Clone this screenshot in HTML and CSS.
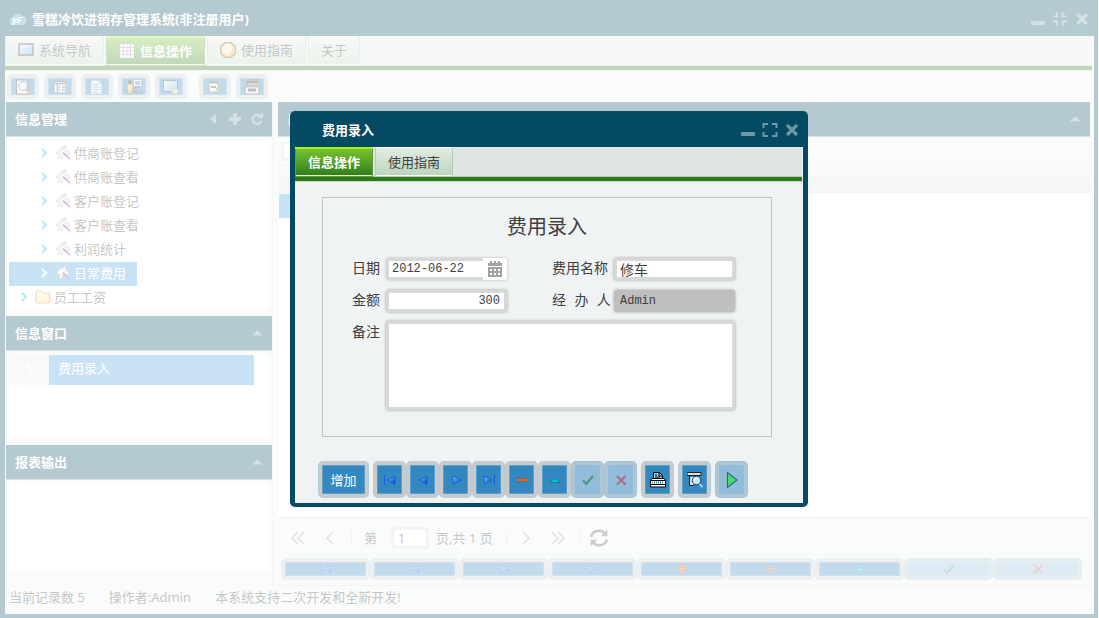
FILE: index.html
```html
<!DOCTYPE html>
<html lang="zh-CN">
<head>
  <meta charset="UTF-8">
  <title>雪糕冷饮进销存管理系统</title>
  <meta name="viewport" content="width=device-width, initial-scale=1">
  <link rel="stylesheet" href="styles.css">
</head>
<body>

<!-- ICONS -->
<svg class="defs" aria-hidden="true">
  <defs>
    <linearGradient id="blue" x1="0" y1="0" x2="1" y2="1"><stop offset="0" stop-color="#7cc4ff"/><stop offset="1" stop-color="#0048d8"/></linearGradient>
    <linearGradient id="screen" x1="0" y1="0" x2="1" y2="1"><stop offset="0" stop-color="#e4f4ff"/><stop offset="1" stop-color="#4aa4e0"/></linearGradient>
  </defs>
  <symbol id="i-min" viewBox="0 0 16 16"><rect x="1" y="10" width="14" height="4" rx="1" fill="currentColor"/></symbol>
  <symbol id="i-max" viewBox="0 0 16 16"><path d="M1.500 6V2H6M10 2h4.500v4M14.500 10v4H10M6 14H1.500v-4" fill="none" stroke="currentColor" stroke-width="2"/></symbol>
  <symbol id="i-restore" viewBox="0 0 16 16"><path d="M5 1v4.500H1M10.500 1v4.500H15M15 10.500h-4.500V15M5 15v-4.500H1" fill="none" stroke="currentColor" stroke-width="2"/></symbol>
  <symbol id="i-close" viewBox="0 0 16 16"><path d="M4 4l8 8M12 4l-8 8" stroke="currentColor" stroke-width="3.200" stroke-linecap="round"/></symbol>
  <symbol id="i-left" viewBox="0 0 16 16"><path d="M11 3v10L5 8z" fill="currentColor"/></symbol>
  <symbol id="i-up" viewBox="0 0 16 16"><path d="M3 10.500h10.500L8.200 5z" fill="currentColor"/></symbol>
  <symbol id="i-add" viewBox="0 0 16 16"><path d="M8 2v12M2 8h12" stroke="currentColor" stroke-width="4"/></symbol>
  <symbol id="i-reload" viewBox="0 0 16 16"><path d="M11.500 5.200A4.500 4.500 0 1 0 12.500 9.500" fill="none" stroke="currentColor" stroke-width="2.600"/><path d="M8 7h6V1z" fill="currentColor"/></symbol>
  <symbol id="i-chev" viewBox="0 0 16 16"><path d="M6 4l4 4-4 4" fill="none" stroke="currentColor" stroke-width="1.800"/></symbol>
  <symbol id="i-house" viewBox="0 0 16 16"><path d="M1 8l6-6 2 1V1h2v4l4 3-2 1v3l-3-3-2 1-1 4-3-1V9z" fill="#e4e4e4" stroke="#777" stroke-width=".8" stroke-dasharray="2 1"/><path d="M9 8.500l6 6" stroke="#9b20e0" stroke-width="1.500"/><path d="M8 7.500l3 3" stroke="#444" stroke-width="1.500"/></symbol>
  <symbol id="i-folder" viewBox="0 0 16 16"><path d="M1 13V3l1-1h4l2 2h6v2h1v7l-1 1H2z" fill="#fce79a" stroke="#ac8434"/><path d="M3 13V6h11" stroke="#fff9d2" fill="none"/></symbol>
  <symbol id="i-screen" viewBox="0 0 16 16"><rect x="1" y="2" width="14" height="11" fill="url(#screen)" stroke="#333" stroke-width="1.500"/></symbol>
  <symbol id="i-grid" viewBox="0 0 16 16"><rect x="1" y="1" width="14" height="14" rx="2" fill="#fff"/><path d="M4.500 1v14M8 1v14M11.500 1v14M1 4.500h14M1 8h14M1 11.500h14" stroke="#a68caa" stroke-width="1"/></symbol>
  <symbol id="i-help" viewBox="0 0 16 16"><path d="M5 .500h6L15.500 5v6L11 15.500H5L.500 11V5z" fill="#f7b443" stroke="#704b22" stroke-width="1.400"/><circle cx="7" cy="7" r="5" fill="#ffe4a8"/><path d="M5.500 6c0-3 5-3 5 0 0 1.600-2.500 1.500-2.500 3.500M8 11v1.800" fill="none" stroke="#fff" stroke-width="2"/></symbol>
  <symbol id="i-find" viewBox="0 0 16 16"><path d="M1.500 1H11l2 2v12H1.500z" fill="#f4f4f4" stroke="#333"/><circle cx="8" cy="7" r="4.500" fill="#cdefff" stroke="#3a5870"/><path d="M11 10l4 5" stroke="#c55828" stroke-width="2.400"/></symbol>
  <symbol id="i-form" viewBox="0 0 16 16"><rect x="2" y="2.500" width="12" height="11.500" fill="#e6eef5" stroke="#456"/><path d="M2 4.500h12M5.500 5v9M7 8h1M7 11h1M10 8h3M10 11h3" stroke="#456" stroke-width="1.500"/></symbol>
  <symbol id="i-doc" viewBox="0 0 16 16"><path d="M2 1h8l3 3v11H2z" fill="#dff1ff" stroke="#3c88c0"/><path d="M10 1v3h3M4 5.500h5M4 8h7M4 10.500h7M4 13h5" fill="none" stroke="#4e89b8"/></symbol>
  <symbol id="i-user" viewBox="0 0 16 16"><circle cx="4" cy="3" r="2" fill="#3b2208"/><path d="M1 5h6v6H6v4H2v-4H1z" fill="#efc05c" stroke="#432" stroke-width=".8"/><rect x="8.500" y="1.500" width="6" height="5" fill="#6565f2" stroke="#eee"/><path d="M8 8h6M8 14V9h2v5h5v-3" fill="none" stroke="#444" stroke-width="1.300"/></symbol>
  <symbol id="i-view" viewBox="0 0 16 16"><rect x=".500" y="1.500" width="14" height="11" fill="url(#screen)" stroke="#345"/><circle cx="12" cy="12" r="3" fill="#c6e784" stroke="#a7a"/></symbol>
  <symbol id="i-export" viewBox="0 0 16 16"><path d="M2 4h9v9H2z" fill="#eee" stroke="#555"/><path d="M2 3h9M4 8h5" stroke="#444" stroke-width="2"/><path d="M12 7v6M9 10h6" stroke="#2ca82c" stroke-width="2"/></symbol>
  <symbol id="i-printer" viewBox="0 0 16 16"><path d="M3 1h12v5H3zM1 7h14v8H1z" fill="#eee" stroke="#333"/><path d="M3 3h11M4 11h8" stroke="#222" stroke-width="3"/><path d="M1 8h13" stroke="#555"/></symbol>
  <symbol id="i-first" viewBox="0 0 16 16"><path d="M2.500 3v10" stroke="#1262dc"/><path d="M13 4v8L5 8z" fill="url(#blue)" stroke="#0950c8" stroke-width=".7"/></symbol>
  <symbol id="i-prev" viewBox="0 0 16 16"><path d="M12 4v8L4 8z" fill="url(#blue)" stroke="#0950c8" stroke-width=".7"/></symbol>
  <symbol id="i-next" viewBox="0 0 16 16"><path d="M5 4v8l8-4z" fill="url(#blue)" stroke="#0950c8" stroke-width=".7"/></symbol>
  <symbol id="i-last" viewBox="0 0 16 16"><path d="M3 4v8l8-4z" fill="url(#blue)" stroke="#0950c8" stroke-width=".7"/><path d="M13.500 3v10" stroke="#1262dc"/></symbol>
  <symbol id="i-plus" viewBox="0 0 16 16"><path d="M8 3v10M3 8h10" stroke="#d33a00" stroke-width="3"/><path d="M8 4v8M4 8h8" stroke="#ff9c50"/></symbol>
  <symbol id="i-minus" viewBox="0 0 16 16"><path d="M3 8h10" stroke="#d33a00" stroke-width="3"/><path d="M3 8h10" stroke="#ff9a28"/></symbol>
  <symbol id="i-edit" viewBox="0 0 16 16"><path d="M3 10.500h10L8 6z" fill="#00cbd0" stroke="#087a8e" stroke-width=".8"/></symbol>
  <symbol id="i-ok" viewBox="0 0 16 16"><path d="M3 8.500L6.200 12 13 4" fill="none" stroke="#178038" stroke-width="2"/></symbol>
  <symbol id="i-cancel" viewBox="0 0 16 16"><path d="M4 4l8.500 8.500M12.500 4L4 12.500" stroke="#d13030" stroke-width="1.800"/></symbol>
  <symbol id="i-print" viewBox="0 0 16 16"><path d="M3.500 7V.500h6l3 3V7z" fill="#9fd0ec" stroke="#000"/><path d="M9 1v3h3M5 3h2M5 5h5" fill="none" stroke="#000"/><path d="M.500 8.500l1.500-2h12l1.500 2v6.500H.500z" fill="#fff" stroke="#000"/><path d="M1 8.500h14M1 12.500h14" stroke="#000"/><path d="M2 10.500h12" stroke="#2c83b9" stroke-width="2" stroke-dasharray="1 1"/></symbol>
  <symbol id="i-preview" viewBox="0 0 16 16"><path d="M0 .500h14v3H0z" fill="#ddd" stroke="#222"/><path d="M2.500 4v9.500H7" fill="#ccc" stroke="#222"/><path d="M3.500 5h3v7h-3z" fill="#eee"/><circle cx="9.500" cy="8.500" r="4.300" fill="#bdeaff" stroke="#163c5c"/><path d="M7.500 9c0-2 1-3 3-3" fill="none" stroke="#fff" stroke-width="1.500"/><path d="M12.500 12l3 3" stroke="#8ed8ff" stroke-width="2"/></symbol>
  <symbol id="i-play" viewBox="0 0 16 16"><path d="M4 1.500v13L12.500 8z" fill="#47e070" stroke="#3c6575"/></symbol>
  <symbol id="i-pg1" viewBox="0 0 16 16"><path d="M8 2L2 8l6 6M14 2L8 8l6 6" fill="none" stroke="currentColor" stroke-width="1.500"/></symbol>
  <symbol id="i-pg2" viewBox="0 0 16 16"><path d="M11 2L5 8l6 6" fill="none" stroke="currentColor" stroke-width="1.500"/></symbol>
  <symbol id="i-pg3" viewBox="0 0 16 16"><path d="M5 2l6 6-6 6" fill="none" stroke="currentColor" stroke-width="1.500"/></symbol>
  <symbol id="i-pg4" viewBox="0 0 16 16"><path d="M2 2l6 6-6 6M8 2l6 6-6 6" fill="none" stroke="currentColor" stroke-width="1.500"/></symbol>
  <symbol id="i-refresh" viewBox="0 0 16 16"><path d="M1 7c1-6 9-7 12-3M15 9c-1 6-9 7-12 3" fill="none" stroke="currentColor" stroke-width="2.200"/><path d="M15.500 .500v6h-6zM.500 15.500v-6h6z" fill="currentColor"/></symbol>
  <symbol id="i-cal" viewBox="0 0 16 16"><path d="M1 2h14v3H1zM1 6h14v10H1zM3 0h2v3H3zM11 0h2v3h-2zM7 0h2v3H7z" fill="#a2a2a2"/><path d="M3 8h2v2H3zM7 8h2v2H7zM11 8h2v2h-2zM3 12h2v2H3zM7 12h2v2H7zM11 12h2v2h-2z" fill="#fff"/></symbol>
</svg>

<!-- MAIN WINDOW -->
<div class="window">
  <header class="titlebar">
    <svg class="logo" viewBox="0 0 16 16"><path d="M4 14a4 4 0 0 1-1-8 5 5 0 0 1 9-1 4 4 0 0 1 1 9z" fill="#4c9fd2"/><text x="2" y="12">yF</text></svg>
    <h1>雪糕冷饮进销存管理系统(非注册用户)</h1>
    <div class="tools">
      <button aria-label="最小化"><svg><use href="#i-min"/></svg></button>
      <button aria-label="还原"><svg><use href="#i-restore"/></svg></button>
      <button aria-label="关闭"><svg><use href="#i-close"/></svg></button>
    </div>
  </header>

  <div class="window-body">
    <nav class="tabs">
      <button class="tab"><svg><use href="#i-screen"/></svg>系统导航</button>
      <button class="tab active"><svg><use href="#i-grid"/></svg>信息操作</button>
      <button class="tab"><svg><use href="#i-help"/></svg>使用指南</button>
      <button class="tab">关于</button>
    </nav>

    <div class="toolbar">
      <button class="btn" aria-label="查找"><svg><use href="#i-find"/></svg></button>
      <button class="btn" aria-label="表单"><svg><use href="#i-form"/></svg></button>
      <button class="btn" aria-label="文档"><svg><use href="#i-doc"/></svg></button>
      <button class="btn" aria-label="用户"><svg><use href="#i-user"/></svg></button>
      <button class="btn" aria-label="查看"><svg><use href="#i-view"/></svg></button>
      <button class="btn group" aria-label="导出"><svg><use href="#i-export"/></svg></button>
      <button class="btn" aria-label="打印"><svg><use href="#i-printer"/></svg></button>
    </div>

    <main class="layout">
      <aside class="side">
        <section class="panel">
          <div class="panel-head"><h2>信息管理</h2>
            <div class="tools">
              <button aria-label="折叠"><svg><use href="#i-left"/></svg></button>
              <button aria-label="添加"><svg><use href="#i-add"/></svg></button>
              <button aria-label="刷新"><svg><use href="#i-reload"/></svg></button>
            </div>
          </div>
          <div class="panel-body tree">
            <ul>
              <li><svg class="chev"><use href="#i-chev"/></svg><svg><use href="#i-house"/></svg>供商账登记</li>
              <li><svg class="chev"><use href="#i-chev"/></svg><svg><use href="#i-house"/></svg>供商账查看</li>
              <li><svg class="chev"><use href="#i-chev"/></svg><svg><use href="#i-house"/></svg>客户账登记</li>
              <li><svg class="chev"><use href="#i-chev"/></svg><svg><use href="#i-house"/></svg>客户账查看</li>
              <li><svg class="chev"><use href="#i-chev"/></svg><svg><use href="#i-house"/></svg>利润统计</li>
              <li class="selected"><svg class="chev"><use href="#i-chev"/></svg><svg><use href="#i-house"/></svg>日常费用</li>
              <li class="top"><svg class="chev"><use href="#i-chev"/></svg><svg class="folder"><use href="#i-folder"/></svg>员工工资</li>
            </ul>
          </div>
        </section>

        <section class="panel">
          <div class="panel-head"><h2>信息窗口</h2>
            <div class="tools"><button aria-label="折叠"><svg><use href="#i-up"/></svg></button></div>
          </div>
          <div class="panel-body">
            <table class="list"><tr><th>1</th><td>费用录入</td></tr></table>
          </div>
        </section>

        <section class="panel">
          <div class="panel-head"><h2>报表输出</h2>
            <div class="tools"><button aria-label="折叠"><svg><use href="#i-up"/></svg></button></div>
          </div>
          <div class="panel-body last"></div>
        </section>
      </aside>

      <section class="content">
        <div class="panel-head"><h2>日常</h2>
          <div class="tools"><button aria-label="折叠"><svg><use href="#i-up"/></svg></button></div>
        </div>
        <div class="filter"><input type="text" aria-label="筛选"></div>
        <div class="grid-head"></div>
        <div class="grid-body"><div class="grid-row"></div></div>
        <div class="pager">
          <button aria-label="首页"><svg><use href="#i-pg1"/></svg></button>
          <button aria-label="上一页"><svg><use href="#i-pg2"/></svg></button>
          <i class="sep"></i>
          <label for="page">第</label>
          <input id="page" type="text" value="1">
          <span>页,共 1 页</span>
          <i class="sep"></i>
          <button aria-label="下一页"><svg><use href="#i-pg3"/></svg></button>
          <button aria-label="末页"><svg><use href="#i-pg4"/></svg></button>
          <i class="sep"></i>
          <button class="refresh" aria-label="刷新"><svg><use href="#i-refresh"/></svg></button>
        </div>
        <div class="record-nav">
          <button class="btn" aria-label="首条"><svg><use href="#i-first"/></svg></button>
          <button class="btn" aria-label="上一条"><svg><use href="#i-prev"/></svg></button>
          <button class="btn" aria-label="下一条"><svg><use href="#i-next"/></svg></button>
          <button class="btn" aria-label="末条"><svg><use href="#i-last"/></svg></button>
          <button class="btn" aria-label="增加"><svg><use href="#i-plus"/></svg></button>
          <button class="btn" aria-label="删除"><svg><use href="#i-minus"/></svg></button>
          <button class="btn" aria-label="编辑"><svg><use href="#i-edit"/></svg></button>
          <button class="btn" aria-label="确定" disabled><svg><use href="#i-ok"/></svg></button>
          <button class="btn" aria-label="取消" disabled><svg><use href="#i-cancel"/></svg></button>
        </div>
      </section>
    </main>

    <footer class="status">
      <span>当前记录数 5</span>
      <span>操作者:Admin</span>
      <span>本系统支持二次开发和全新开发!</span>
    </footer>
  </div>
</div>

<!-- DIALOG -->
<div class="mask">
  <div class="dialog" role="dialog" aria-labelledby="dlg-title">
    <div class="dialog-head">
      <h2 id="dlg-title">费用录入</h2>
      <div class="tools">
        <button aria-label="最小化"><svg><use href="#i-min"/></svg></button>
        <button aria-label="最大化"><svg><use href="#i-max"/></svg></button>
        <button aria-label="关闭"><svg><use href="#i-close"/></svg></button>
      </div>
    </div>
    <div class="tabs">
      <button class="tab active">信息操作</button>
      <button class="tab">使用指南</button>
    </div>

    <form class="form">
      <h3>费用录入</h3>
      <div class="fields">
        <label for="date">日期</label>
        <div class="date"><input id="date" type="text" value="2012-06-22"><button type="button" aria-label="选择日期"><svg><use href="#i-cal"/></svg></button></div>
        <label for="name" class="second">费用名称</label>
        <input id="name" type="text" value="修车">
        <label for="amount">金额</label>
        <input id="amount" class="number" type="text" value="300">
        <label for="user" class="second">经 办 人</label>
        <input id="user" type="text" value="Admin" readonly>
        <label for="memo">备注</label>
        <textarea id="memo"></textarea>
      </div>
    </form>

    <div class="actions">
      <button class="btn text">增加</button>
      <button class="btn" aria-label="首条"><svg><use href="#i-first"/></svg></button>
      <button class="btn" aria-label="上一条"><svg><use href="#i-prev"/></svg></button>
      <button class="btn" aria-label="下一条"><svg><use href="#i-next"/></svg></button>
      <button class="btn" aria-label="末条"><svg><use href="#i-last"/></svg></button>
      <button class="btn" aria-label="删除"><svg><use href="#i-minus"/></svg></button>
      <button class="btn" aria-label="编辑"><svg><use href="#i-edit"/></svg></button>
      <button class="btn" aria-label="确定" disabled><svg><use href="#i-ok"/></svg></button>
      <button class="btn" aria-label="取消" disabled><svg><use href="#i-cancel"/></svg></button>
      <button class="btn group" aria-label="打印"><svg><use href="#i-print"/></svg></button>
      <button class="btn group" aria-label="预览"><svg><use href="#i-preview"/></svg></button>
      <button class="btn group off" aria-label="运行"><svg class="big"><use href="#i-play"/></svg></button>
    </div>
  </div>
</div>

</body>
</html>
```
FILE: styles.css
```css
:root{
  --navy:#044a62;
  --bg:#eff3f4;
  --bar:#dfe5e5;
  --blue:#3388c0;
  --select:#48a2e1;
  --green:#2c7a1c;
  --edge:#cacaca;
  --text:#404040;
}
*{box-sizing:border-box;margin:0;padding:0}
body{font:13px/20px "Noto Sans","Noto Sans CJK SC",sans-serif;color:var(--text);background:#fff;height:100vh;overflow:hidden}
button,input,textarea{font:inherit;color:inherit}
button{border:0;background:none;display:inline-flex;align-items:center;justify-content:center;white-space:nowrap}
svg{width:16px;height:16px;flex:none;display:block}
.defs{position:absolute;width:0;height:0}
h1,h2{font-size:13px;font-weight:700;color:#fff}

/* ---------- WINDOW ---------- */
.window{height:100vh;display:flex;flex-direction:column;background:var(--navy);margin-right:1px}
.titlebar{height:36px;display:flex;align-items:center;gap:6px;padding:2px 8px 0 10px}
.logo text{font:italic 700 9px "Liberation Sans",sans-serif;fill:#fff}
.tools{margin-left:auto;display:flex;gap:6px;color:#6f97a6}
.window-body{flex:1;min-height:0;margin:0 4px 4px 5px;background:var(--bg);display:flex;flex-direction:column}
.tabs{display:flex;gap:2px;background:var(--bar);height:35px;border-bottom:1px solid #c8dac8;box-shadow:inset 0 -4px var(--green),inset 0 -5px #b0d0b0;flex:none;margin-right:2px}
.tab{height:30px;padding:0 12px 2px;gap:5px;border:1px solid #b4ccb4;border-top-color:#fff;border-radius:3px 3px 0 0;background:linear-gradient(#e3ebe3,#bbd4bb);box-shadow:inset 0 -1px #fff}
.tab.active{color:#fff;font-weight:700;border-color:#5d9b39;border-top:2px solid #aaf014;background:linear-gradient(#78c232,#2e7d1c);box-shadow:inset 0 -1px #e6f5be}
.toolbar{display:flex;gap:5px;padding:3px 2px;height:31px;flex:none}
.toolbar .btn{width:30px;height:23px}
.toolbar .group{margin-left:8px}
.btn{margin:1px;border:3px solid var(--edge);border-radius:4px;background:var(--blue);color:#fff;box-shadow:inset 0 0 0 1px #5c9fc9,0 0 0 1px #b4cdd8}
.btn:disabled,.btn.off{border-color:#b0c6d2;background:#91bcda;box-shadow:0 0 0 1px #a9c5d5}
.btn:disabled svg{opacity:.6}

/* ---------- PANELS ---------- */
.layout{flex:1;min-height:0;display:flex;gap:5px;padding-right:3px}
.side{width:268px;flex:none;display:grid;grid-template-rows:214fr 129fr 141fr;padding-left:1px}
.panel{display:flex;flex-direction:column;min-height:0;border-right:1px solid #dde3e3}
.panel-head{height:35px;flex:none;display:flex;align-items:center;padding:0 7px 0 9px;background:var(--navy);border-bottom:1px solid #7da0ad}
.panel-body{flex:1;min-height:0;margin:4px 3px 7px;background:#fff;overflow:hidden}
.panel-body.last{margin-bottom:15px}
.tree ul{list-style:none;padding:1px 0}
.tree li{height:24px;width:128px;white-space:nowrap;display:flex;align-items:center;padding:0 0 2px 27px;gap:3px}
.tree li.top{padding-left:7px}
.tree .chev{color:#00aee0}
.tree .selected{background:var(--select);color:#fff}
.tree .selected .chev{color:#fff}
.list{width:245px;height:30px;border-collapse:collapse}
.list th{width:40px;background:#ececec;color:#fff;padding-bottom:4px}
.list td{background:var(--select);color:#fff;padding:0 9px 4px}
.content{flex:1;min-width:0;display:flex;flex-direction:column;border-bottom:1px solid #d2d8d8;border-right:1px solid #dde3e3}
.filter{height:27px;padding:4px 3px;flex:none}
.filter input{width:140px;height:20px;border:3px solid #e0e0e0;display:block}
.grid-head{height:30px;flex:none;background:linear-gradient(#eee,#e0e0e0);border-top:1px solid #ddd}
.grid-body{flex:1;background:#fff;padding-left:1px;min-height:0}
.grid-row{width:300px;height:24px;background:var(--select)}
.pager{height:39px;flex:none;display:flex;align-items:center;border-top:1px solid #d0d0d0;padding:2px 9px 0}
.pager button{width:22px;height:22px;margin-right:10px;color:#999;border-radius:3px;background:#f3f5f5}
.pager .refresh{color:#555}
.pager .refresh svg{width:18px;height:18px}
.pager .sep{width:1px;height:14px;background:#d0d0d0;margin-right:12px}
.pager input{width:38px;height:22px;border:3px solid #dadada;border-radius:3px;padding:0 4px;margin:0 7px 0 14px;background:#fff}
.pager span{margin-right:13px}
.pager .sep+button{margin-left:-4px}
.record-nav{display:flex;padding:2px 8px 5px 3px}
.record-nav .btn{flex:1;height:20px;min-width:0}
.status{height:28px;flex:none;display:flex;padding:1px 4px;gap:24px}

/* ---------- DIALOG ---------- */
.mask{position:fixed;inset:0;background:rgba(255,255,255,.7);display:flex;align-items:center;justify-content:center;padding-right:1px}
.dialog{width:518px;background:var(--bg);border:solid var(--navy);border-width:0 5px 4px;border-radius:5px;overflow:hidden}
.dialog-head{height:36px;display:flex;align-items:center;background:var(--navy);padding:2px 3px 0 27px}
.dialog .tab{padding:0 12px 1px}
.dialog .tabs{margin-right:1px}
.form{margin:15px 31px 0 27px;border:1px solid #bdc3c4;height:240px;padding:17px 29px 0;font-family:"Liberation Mono","Noto Sans CJK SC",monospace}
.form h3{font-size:20px;line-height:28px;font-weight:400;text-align:center}
.fields{display:grid;grid-template-columns:28px 121px 95px 121px;gap:8px 6px;margin-top:14px}
.fields label{font-size:14px;line-height:24px;white-space:nowrap}
.fields .second{padding-left:39px;text-align-last:justify}
.fields input,.fields textarea{border:3px solid #d8d8d8;border-radius:3px;background:#fff;box-shadow:0 0 3px #999;font-size:12px;min-width:0}
.fields input{height:22px;width:100%;padding:0 3px;margin-top:1px}
.fields #name{font-size:14px}
.fields .number{text-align:right;padding-right:4px}
.fields input[readonly]{background:#bfbfbf;border-color:#bfbfbf}
.date{display:flex;height:22px;margin-top:1px;background:#fff;border-radius:3px;box-shadow:0 0 3px #bbb}
.date input{box-shadow:none;border-right:0;border-radius:3px 0 0 3px;margin-top:0}
.date button{width:24px;flex:none}
.fields textarea{grid-column:2/5;height:89px;resize:none;display:block;width:100%}
.actions{display:flex;padding:24px 23px 5px}
.actions .btn{width:31px;height:35px}
.actions .text{width:49px;margin-right:5px}
.actions .group{margin-left:5px}
.actions .big{width:18px;height:18px}
```
